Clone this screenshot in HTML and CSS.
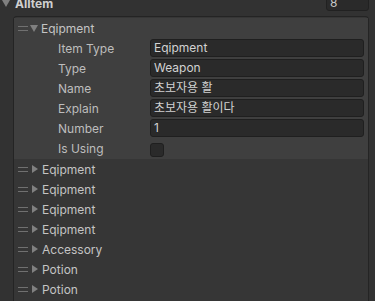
FILE: index.html
```html
<!DOCTYPE html>
<html>
<head>
<meta charset="utf-8">
<link rel="stylesheet" href="styles.css">
</head>
<body>
<div class="header">
  <span class="tri-down hdr-tri"></span>
  <span class="hdr-title">AlItem</span>
  <span class="hdr-num">8</span>
</div>
<div class="list">
  <div class="element open">
    <div class="el-row">
      <span class="handle"></span>
      <span class="tri-down"></span>
      <span class="el-name">Eqipment</span>
    </div>
    <div class="prop"><span class="label">Item Type</span><span class="field">Eqipment</span></div>
    <div class="prop"><span class="label">Type</span><span class="field">Weapon</span></div>
    <div class="prop"><span class="label">Name</span><span class="field">초보자용 활</span></div>
    <div class="prop"><span class="label">Explain</span><span class="field">초보자용 활이다</span></div>
    <div class="prop"><span class="label">Number</span><span class="field">1</span></div>
    <div class="prop"><span class="label">Is Using</span><span class="check"></span></div>
  </div>
  <div class="el-row"><span class="handle"></span><span class="tri-right"></span><span class="el-name">Eqipment</span></div>
  <div class="el-row"><span class="handle"></span><span class="tri-right"></span><span class="el-name">Eqipment</span></div>
  <div class="el-row"><span class="handle"></span><span class="tri-right"></span><span class="el-name">Eqipment</span></div>
  <div class="el-row"><span class="handle"></span><span class="tri-right"></span><span class="el-name">Eqipment</span></div>
  <div class="el-row"><span class="handle"></span><span class="tri-right"></span><span class="el-name">Accessory</span></div>
  <div class="el-row"><span class="handle"></span><span class="tri-right"></span><span class="el-name">Potion</span></div>
  <div class="el-row"><span class="handle"></span><span class="tri-right"></span><span class="el-name">Potion</span></div>
</div>
</body>
</html>
```
FILE: styles.css
```css
html, body {
  margin: 0;
  padding: 0;
}
body {
  background: #323232;
  font-family: Inter, "Noto Sans CJK KR", sans-serif;
  font-size: 12px;
  color: #c4c4c4;
  overflow: hidden;
  height: 301px;
}
.header {
  height: 16px;
  display: flex;
  align-items: center;
  position: relative;
}
.hdr-tri {
  margin-left: 2px;
  margin-top: -10px;
}
.hdr-title {
  font-weight: bold;
  margin-left: 5px;
  margin-top: -10px;
  color: #d0d0d0;
}
.hdr-num {
  margin-left: auto;
  margin-right: 6px;
  width: 43px;
  height: 16px;
  margin-top: -10px;
  background: #2a2a2a;
  border: 1px solid #212121;
  border-radius: 3px;
  padding-left: 3px;
  box-sizing: border-box;
  line-height: 10px;
  color: #c8c8c8;
  display: flex;
  align-items: flex-end;
  padding-bottom: 2px;
}
.list {
  margin-left: 13px;
  width: 356px;
  border: 1px solid #242424;
  border-radius: 4px 4px 0 0;
  border-bottom: none;
  background: #363636;
  height: 290px;
  box-sizing: border-box;
  padding-top: 1px;
}
.element.open {
  background: #3f3f3f;
  padding-bottom: 1px;
}
.el-row {
  height: 20px;
  display: flex;
  align-items: center;
}
.handle {
  width: 10px;
  height: 5px;
  border-top: 1px solid #707070;
  border-bottom: 1px solid #707070;
  box-sizing: border-box;
  margin-left: 4px;
}
.tri-right {
  width: 0;
  height: 0;
  border-left: 6px solid #808080;
  border-top: 4.5px solid transparent;
  border-bottom: 4.5px solid transparent;
  margin-left: 4px;
  margin-right: 4px;
}
.tri-down {
  width: 0;
  height: 0;
  border-top: 7px solid #808080;
  border-left: 4.5px solid transparent;
  border-right: 4.5px solid transparent;
}
.el-row .tri-down {
  margin-left: 2px;
  margin-right: 3px;
}
.el-name {
  color: #c4c4c4;
}
.prop {
  height: 20px;
  display: flex;
  align-items: center;
}
.label {
  width: 92px;
  margin-left: 44px;
  color: #bdbdbd;
}
.field {
  width: 214px;
  height: 18px;
  background: #2a2a2a;
  border: 1px solid #1f1f1f;
  border-radius: 3px;
  box-sizing: border-box;
  padding-left: 3px;
  line-height: 16px;
  color: #d2d2d2;
}
.check {
  width: 14px;
  height: 14px;
  background: #2a2a2a;
  border: 1px solid #1f1f1f;
  border-radius: 3px;
  box-sizing: border-box;
  margin-top: 3px;
}
```
